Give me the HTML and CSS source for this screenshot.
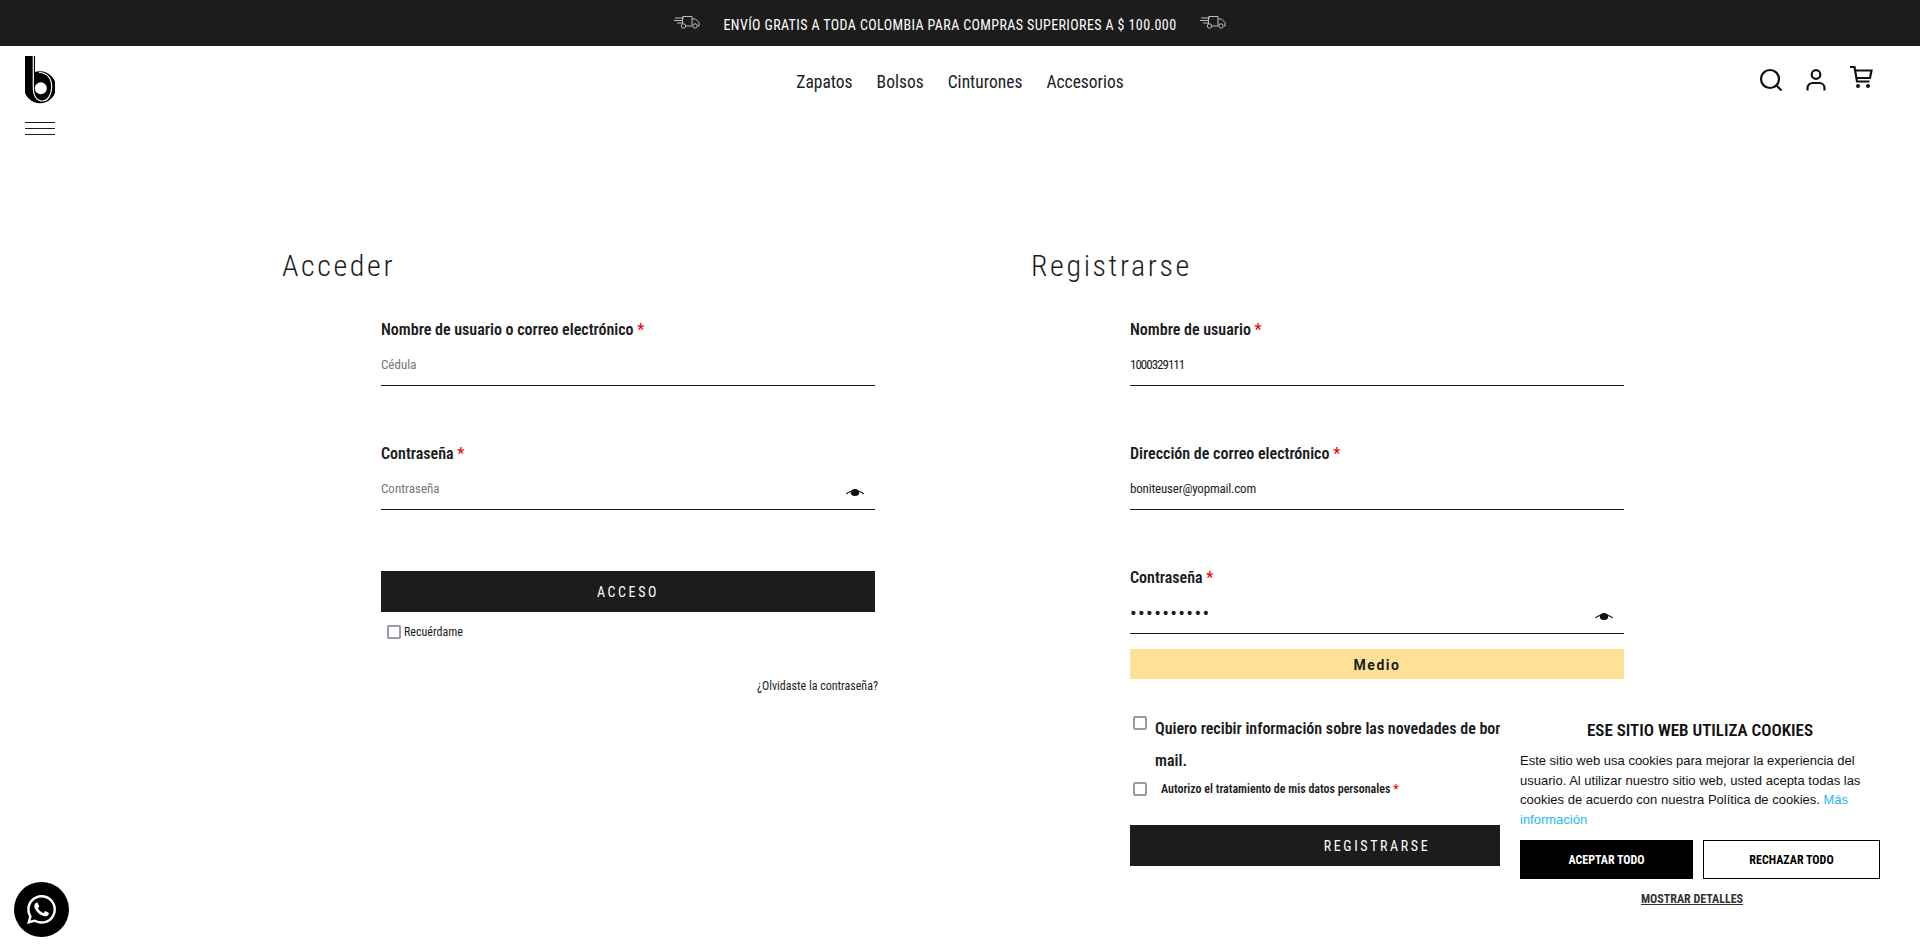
FILE: index.html
```html
<!DOCTYPE html>
<html lang="en">
<head>
    <meta charset="UTF-8">
    <meta name="viewport" content="width=device-width, initial-scale=1.0">
    <title>Mi cuenta</title>
    <link rel="stylesheet" href="styles.css">
</head>
<body>

    <div class="topbar">
        <svg class="truck" viewBox="0 0 26 14"><path d="M9 1.500h9v9M18 4h3.500l3.500 3.500v3.500h-1M18 11h-6M1 3h9M0 5.500h8M3 8h5M8.500 1.500V9"/><circle cx="9.500" cy="11" r="2.200"/><circle cx="21" cy="11" r="2.200"/></svg>
        <span>ENVÍO GRATIS A TODA COLOMBIA PARA COMPRAS SUPERIORES A $ 100.000</span>
        <svg class="truck" viewBox="0 0 26 14"><path d="M9 1.500h9v9M18 4h3.500l3.500 3.500v3.500h-1M18 11h-6M1 3h9M0 5.500h8M3 8h5M8.500 1.500V9"/><circle cx="9.500" cy="11" r="2.200"/><circle cx="21" cy="11" r="2.200"/></svg>
    </div>

    <header class="site-header">
        <div class="brand">
            <svg class="logo" width="30" height="48" viewBox="0 0 30 48">
                <rect class="logo-black" width="10" height="32"/>
                <circle class="logo-black" cx="15" cy="31.300" r="16"/>
                <circle class="logo-hole" cx="15.800" cy="32.300" r="6"/>
                <path class="logo-white" d="M8.300 0V31C8.300 40 12 45 17.500 45C23 45 26.700 38 26.700 31C26.700 22 22 16.500 14 16.500"/>
            </svg>
            <div class="burger"><i></i><i></i><i></i></div>
        </div>
        <nav class="main-nav">
            <a href="#">Zapatos</a>
            <a href="#">Bolsos</a>
            <a href="#">Cinturones</a>
            <a href="#">Accesorios</a>
        </nav>
        <div class="header-icons">
            <svg width="24" height="24" viewBox="0 0 24 24"><circle cx="11" cy="11" r="9"/><path d="M17.500 17.500L22.500 22.500"/></svg>
            <svg width="24" height="24" viewBox="0 0 24 24"><circle cx="12" cy="6.500" r="4.300"/><path d="M3.500 22.500v-2.500a5 5 0 0 1 5-5h7a5 5 0 0 1 5 5V22.500"/></svg>
            <svg class="cart" width="24" height="24" viewBox="0 0 24 24"><path d="M1 1h4.500l2.500 14.500h12.500M6 4.500h16.500l-1.500 7.500H7.500"/><circle class="dot" cx="9" cy="20" r="2"/><circle class="dot" cx="19" cy="20" r="2"/></svg>
        </div>
    </header>

    <main class="account">
        <section class="col">
            <h2>Acceder</h2>
            <form class="account-form">
                <div class="field">
                    <label>Nombre de usuario o correo electrónico <b>*</b></label>
                    <input type="text" placeholder="Cédula">
                </div>
                <div class="field">
                    <label>Contraseña <b>*</b></label>
                    <div class="pass-wrap">
                        <input type="password" placeholder="Contraseña">
                        <svg class="eye" viewBox="0 0 18 9"><path class="eye-wing" d="M0.500 6C4 2 14 2 17.500 6"/><ellipse cx="9" cy="4.500" rx="4.200" ry="3.600"/></svg>
                    </div>
                </div>
                <button type="button" class="btn-dark login-btn">ACCESO</button>
                <label class="remember"><input type="checkbox">Recuérdame</label>
                <a href="#" class="forgot">¿Olvidaste la contraseña?</a>
            </form>
        </section>

        <section class="col">
            <h2>Registrarse</h2>
            <form class="account-form">
                <div class="field">
                    <label>Nombre de usuario <b>*</b></label>
                    <input type="text" class="digits" value="1000329111">
                </div>
                <div class="field">
                    <label>Dirección de correo electrónico <b>*</b></label>
                    <input type="text" class="email" value="boniteuser@yopmail.com">
                </div>
                <div class="field field-last">
                    <label>Contraseña <b>*</b></label>
                    <div class="pass-wrap">
                        <input type="password" class="dots" value="1000329111">
                        <svg class="eye" viewBox="0 0 18 9"><path class="eye-wing" d="M0.500 6C4 2 14 2 17.500 6"/><ellipse cx="9" cy="4.500" rx="4.200" ry="3.600"/></svg>
                    </div>
                </div>
                <div class="strength">Medio</div>
                <label class="check-news"><input type="checkbox"><span>Quiero recibir información sobre las novedades de bonite por e-mail.</span></label>
                <label class="check-terms"><input type="checkbox"><span>Autorizo el tratamiento de mis datos personales <b>*</b></span></label>
                <button type="button" class="btn-dark">REGISTRARSE</button>
            </form>
        </section>
    </main>

    <a href="#" class="whatsapp">
        <svg width="29" height="29" viewBox="0 0 24 24"><path d="M17.472 14.382c-.297-.149-1.758-.867-2.030-.967-.273-.099-.471-.148-.670.150-.197.297-.767.966-.940 1.164-.173.199-.347.223-.644.075-.297-.150-1.255-.463-2.390-1.475-.883-.788-1.480-1.761-1.653-2.059-.173-.297-.018-.458.130-.606.134-.133.298-.347.446-.520.149-.174.198-.298.298-.497.099-.198.050-.371-.025-.520-.075-.149-.669-1.612-.916-2.207-.242-.579-.487-.500-.669-.510-.173-.008-.371-.010-.570-.010-.198 0-.520.074-.792.372-.272.297-1.040 1.016-1.040 2.479 0 1.462 1.065 2.875 1.213 3.074.149.198 2.096 3.200 5.077 4.487.709.306 1.262.489 1.694.625.712.227 1.360.195 1.871.118.571-.085 1.758-.719 2.006-1.413.248-.694.248-1.289.173-1.413-.074-.124-.272-.198-.570-.347m-5.421 7.403h-.004a9.870 9.870 0 01-5.031-1.378l-.361-.214-3.741.982.998-3.648-.235-.374a9.860 9.860 0 01-1.510-5.260c.001-5.450 4.436-9.884 9.888-9.884 2.640 0 5.122 1.030 6.988 2.898a9.825 9.825 0 012.893 6.994c-.003 5.450-4.437 9.884-9.885 9.884m8.413-18.297A11.815 11.815 0 0012.050 0C5.495 0 .160 5.335.157 11.892c0 2.096.547 4.142 1.588 5.945L.057 24l6.305-1.654a11.882 11.882 0 005.683 1.448h.005c6.554 0 11.890-5.335 11.893-11.893a11.821 11.821 0 00-3.480-8.413z"/></svg>
    </a>

    <aside class="cookies">
        <h3>ESE SITIO WEB UTILIZA COOKIES</h3>
        <p>Este sitio web usa cookies para mejorar la experiencia del usuario. Al utilizar nuestro sitio web, usted acepta todas las cookies de acuerdo con nuestra Política de cookies. <a href="#">Más información</a></p>
        <div class="cookie-btns">
            <button type="button" class="accept">ACEPTAR TODO</button>
            <button type="button" class="reject">RECHAZAR TODO</button>
        </div>
        <a href="#" class="details">MOSTRAR DETALLES</a>
    </aside>

</body>
</html>
```

FILE: styles.css
```css
* {
    box-sizing: border-box;
}
body {
    font-family: Roboto, sans-serif;
    font-stretch: 75%;
    margin: 0;
    padding: 0;
    background-color: #fff;
    color: #1c1c1c;
    overflow: hidden;
}
a {
    color: inherit;
    text-decoration: none;
}

/* top bar */
.topbar {
    height: 46px;
    background-color: #1c1c1c;
    color: #fff;
    display: flex;
    align-items: center;
    justify-content: center;
    gap: 23px;
    font-size: 14px;
    letter-spacing: 0.4px;
    padding: 3px 20px 0 0;
}
.truck {
    width: 26px;
    height: 14px;
    fill: none;
    stroke: #bbb;
    stroke-width: 1;
    margin-top: -5px;
}

/* header */
.site-header {
    height: 104px;
    padding: 10px 25px 0;
    display: grid;
    grid-template-columns: 1fr auto 1fr;
}
.logo {
    display: block;
    overflow: hidden;
}
.logo-black {
    fill: #000;
}
.logo-hole {
    fill: #fff;
}
.logo-white {
    fill: none;
    stroke: #fff;
    stroke-width: 1.200;
}
.burger {
    width: 30px;
    margin-top: 18px;
    display: flex;
    flex-direction: column;
    gap: 5px;
}
.burger i {
    display: block;
    height: 1px;
    background-color: #1c1c1c;
}
.main-nav {
    display: flex;
    gap: 24px;
    height: 52px;
    align-items: center;
    font-size: 17.500px;
}
.header-icons {
    display: flex;
    justify-content: flex-end;
    gap: 21px;
    height: 48px;
    padding-right: 22px;
    align-items: center;
}
.header-icons svg {
    fill: none;
    stroke: #111;
    stroke-width: 2.200;
}
.header-icons .dot {
    fill: #111;
    stroke: none;
}
.header-icons .cart {
    margin-top: -4px;
}

/* forms */
.account {
    margin-left: 282px;
    padding-top: 98px;
    display: grid;
    grid-template-columns: 749px 749px;
}
h2 {
    font-weight: 350;
    font-size: 30px;
    letter-spacing: 2.600px;
    line-height: 36px;
    margin: 0;
}
.account-form {
    width: 494px;
    margin: 36px 0 0 99px;
}
.field {
    height: 124px;
}
.field label {
    display: block;
    font-weight: 600;
    font-size: 16px;
    line-height: 20px;
    margin-bottom: 4px;
}
.field b, .check-terms b {
    color: #e00;
    font-weight: 500;
}
.field input {
    display: block;
    width: 100%;
    height: 42px;
    border: none;
    border-bottom: 1px solid #1c1c1c;
    outline: none;
    padding: 0;
    font-family: Roboto, sans-serif;
    font-stretch: 75%;
    font-size: 13px;
    color: #1c1c1c;
}
.field input::placeholder {
    color: #777;
}
.field input.digits {
    letter-spacing: -1px;
}
.field input.email {
    letter-spacing: -0.200px;
}
.field input.dots {
    font-size: 20px;
    letter-spacing: 1.300px;
}
.pass-wrap {
    position: relative;
}
.eye {
    position: absolute;
    right: 11px;
    top: 20px;
    width: 18px;
    height: 9px;
    fill: #111;
}
.eye-wing {
    fill: none;
    stroke: #111;
    stroke-width: 1.200;
}
.field-last {
    height: auto;
}
.btn-dark {
    display: block;
    width: 100%;
    height: 41px;
    border: none;
    background-color: #1c1c1c;
    color: #fff;
    font-family: Roboto, sans-serif;
    font-stretch: 75%;
    font-size: 14px;
    letter-spacing: 2.600px;
}
.login-btn {
    margin-top: 3px;
}
.remember {
    display: flex;
    align-items: center;
    gap: 3px;
    margin: 13px 0 0 6px;
    font-size: 12px;
}
.remember input, .check-news input, .check-terms input {
    appearance: none;
    width: 14px;
    height: 14px;
    margin: 0;
    flex-shrink: 0;
    background-color: #fff;
    border: 2px solid #9a98a8;
    border-radius: 2px;
}
.forgot {
    display: block;
    width: 497px;
    text-align: right;
    margin-top: 40px;
    font-size: 12px;
}
.strength {
    margin-top: 15px;
    height: 30px;
    padding-top: 2px;
    line-height: 28px;
    background-color: #ffe097;
    text-align: center;
    font-weight: 700;
    font-stretch: 90%;
    font-size: 14px;
    letter-spacing: 1.500px;
}
.check-news {
    display: flex;
    gap: 8px;
    margin: 34px 0 0 3px;
    font-weight: 600;
    font-size: 16px;
    line-height: 32px;
}
.check-news input {
    margin-top: 3px;
}
.check-news span {
    max-width: 420px;
}
.check-terms {
    display: flex;
    align-items: center;
    gap: 14px;
    margin: 0 0 0 3px;
    font-size: 12px;
    font-weight: 600;
    height: 24px;
}
.check-terms + .btn-dark {
    margin-top: 24px;
}

/* overlays */
.whatsapp {
    position: fixed;
    left: 14px;
    bottom: 10px;
    width: 55px;
    height: 55px;
    border-radius: 50%;
    background-color: #000;
    display: flex;
    align-items: center;
    justify-content: center;
    fill: #fff;
}
.cookies {
    position: fixed;
    right: 20px;
    bottom: 0;
    width: 400px;
    height: 241px;
    background-color: #fff;
    padding: 12px 20px 0;
    text-align: center;
}
.cookies h3 {
    margin: 0;
    font-weight: 600;
    font-size: 17px;
    line-height: 24px;
    color: #111;
}
.cookies p {
    margin: 9px 0 0;
    text-align: left;
    font-family: "Liberation Sans", Arial, sans-serif;
    font-stretch: normal;
    font-size: 13px;
    line-height: 19.600px;
    color: #111;
}
.cookies p a {
    color: #29b6f0;
}
.cookie-btns {
    display: flex;
    gap: 10px;
    margin-top: 11px;
}
.cookie-btns button {
    height: 39px;
    border: 1px solid #000;
    font-family: Roboto, sans-serif;
    font-stretch: 75%;
    font-weight: 700;
    font-size: 12px;
}
.accept {
    width: 173px;
    background-color: #000;
    color: #fff;
}
.reject {
    width: 177px;
    background-color: #fff;
    color: #000;
}
.details {
    display: block;
    width: 344px;
    margin-top: 13px;
    font-size: 12px;
    font-weight: 700;
    text-decoration: underline;
    color: #333;
}
```
